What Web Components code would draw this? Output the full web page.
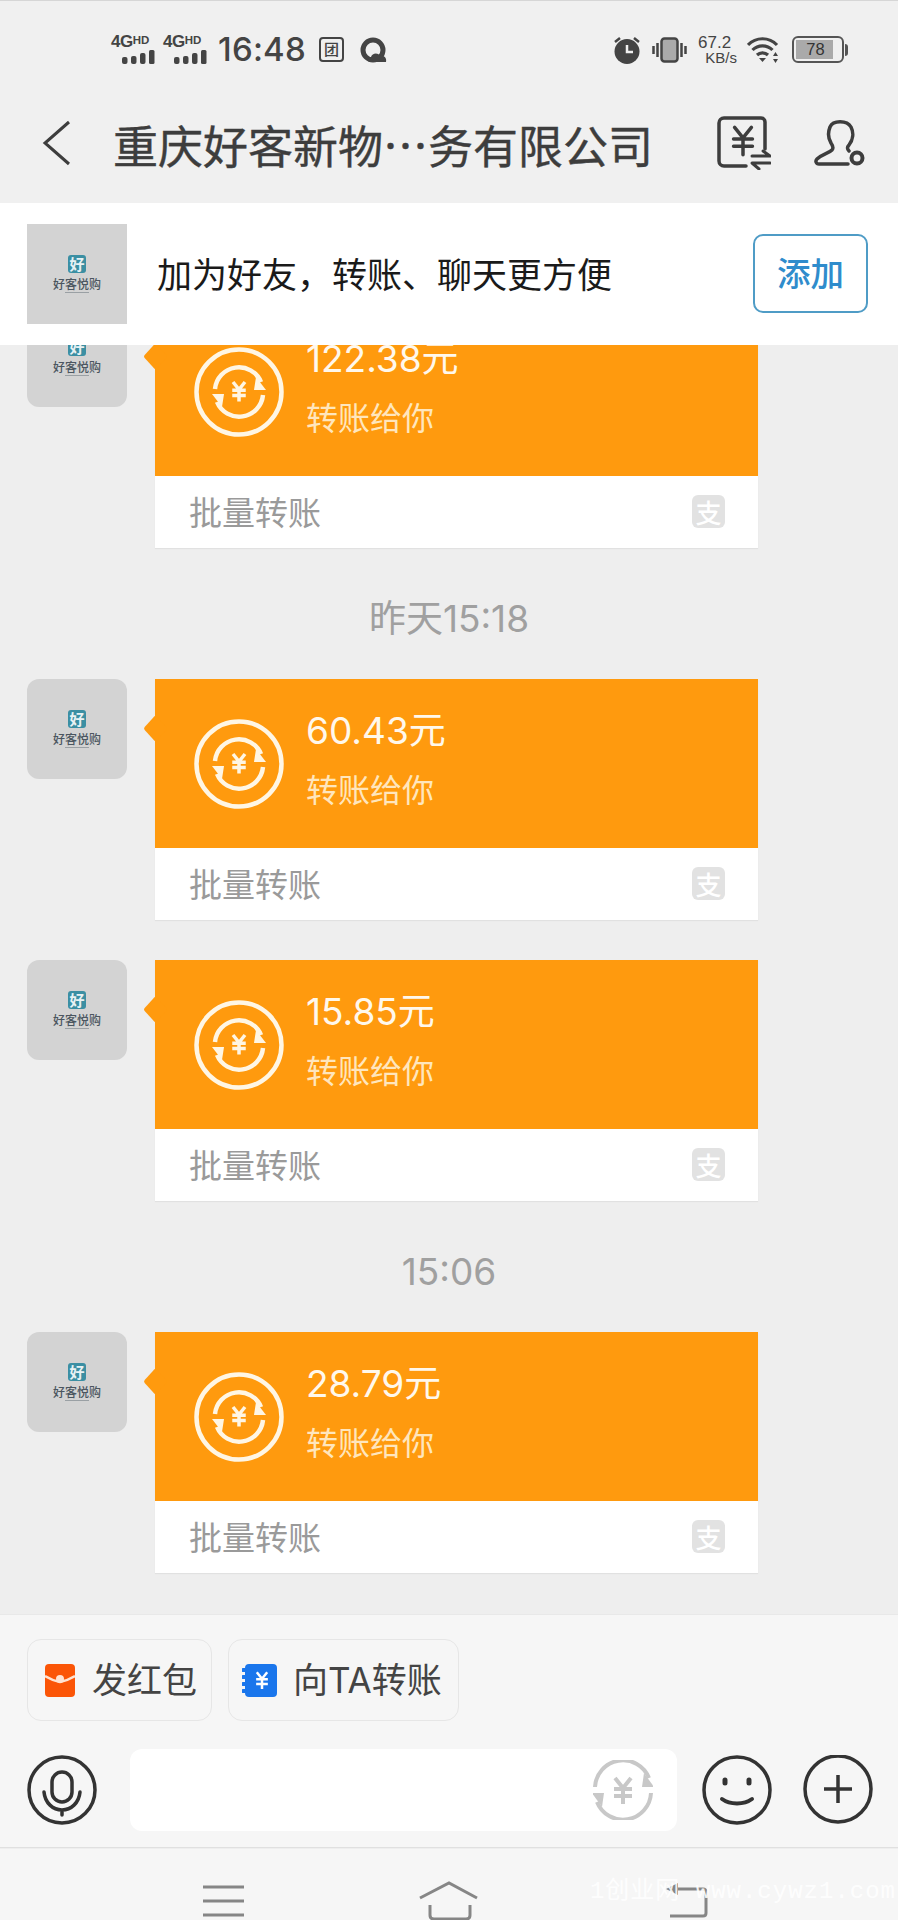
<!DOCTYPE html>
<html lang="zh">
<head>
<meta charset="utf-8">
<title>chat</title>
<style>
	html, body {
		margin: 0;
		padding: 0;
		background: #eee;
		font-family: "Noto Sans CJK SC", "Liberation Sans", sans-serif;
	}
	chat-screen {
		width: 898px;
		height: 1920px;
	}
</style>
</head>
<body>
<chat-screen>
	<status-bar slot="status"></status-bar>
	<chat-header slot="header" title="重庆好客新物…务有限公司"></chat-header>
	<friend-bar slot="friend">加为好友，转账、聊天更方便</friend-bar>
	<transfer-row amount="122.38元"></transfer-row>
	<time-label>昨天15:18</time-label>
	<transfer-row amount="60.43元"></transfer-row>
	<transfer-row amount="15.85元"></transfer-row>
	<time-label>15:06</time-label>
	<transfer-row amount="28.79元"></transfer-row>
	<chat-composer slot="composer"></chat-composer>
	<nav-bar slot="nav"></nav-bar>
</chat-screen>

<script>
const SANS = '"Noto Sans CJK SC", "Liberation Sans", sans-serif';
const LATIN_SANS = '"Inter", "Noto Sans CJK SC", sans-serif';

// the yen sign is used three times, with different stroke and colour
const yenLines = (cx, cy, s) => `
	<path d="M${cx - 8 * s} ${cy - 12 * s}L${cx} ${cy - 2 * s}L${cx + 8 * s} ${cy - 12 * s}
		M${cx - 9 * s} ${cy - 1 * s}H${cx + 9 * s}M${cx - 9 * s} ${cy + 6 * s}H${cx + 9 * s}
		M${cx} ${cy - 2 * s}V${cy + 14 * s}" fill="none"/>`;

// two arcs chasing each other around the yen sign
const loopArcs = (r) => `
	<path d="M${-r} -3A${r} ${r} 0 0 1 ${r - 2} -${Math.round(r * 0.42)}" fill="none"/>
	<path d="M${r} 3A${r} ${r} 0 0 1 ${-r + 2} ${Math.round(r * 0.42)}" fill="none"/>
	<path d="M${r + 3} -${Math.round(r * 0.1)}L${r - 7} -${Math.round(r * 0.62)}L${r - 9} -${Math.round(r * 0.1)}Z" stroke="none" fill="currentColor"/>
	<path d="M${-r - 3} ${Math.round(r * 0.1)}L${-r + 7} ${Math.round(r * 0.62)}L${-r + 9} ${Math.round(r * 0.1)}Z" stroke="none" fill="currentColor"/>`;

class BaseElement extends HTMLElement {
	constructor() {
		super();
		this.attachShadow({ mode: 'open' });
	}

	connectedCallback() {
		this.shadowRoot.innerHTML = this._getTemplate();
	}
}

class ChatScreen extends BaseElement {
	_getTemplate() {
		return `
			<style>
				:host {
					display: flex;
					flex-direction: column;
					position: relative;
					overflow: hidden;
					background: #eee;
				}
				.messages {
					flex: 1;
					min-height: 0;
					overflow: hidden;
					display: flex;
					flex-direction: column;
					justify-content: flex-end;
					padding-bottom: 41px;
				}
			</style>
			<slot name="status"></slot>
			<slot name="header"></slot>
			<slot name="friend"></slot>
			<div class="messages"><slot></slot></div>
			<slot name="composer"></slot>
			<slot name="nav"></slot>
		`;
	}
}

class SignalIcon extends BaseElement {
	_getTemplate() {
		return `
			<style>
				:host {
					display: flex;
					flex-direction: column;
					align-items: flex-end;
					width: 44px;
					color: #444;
					font-family: "Liberation Sans", sans-serif;
					font-weight: 700;
				}
				.net {
					display: flex;
					align-self: flex-start;
					align-items: flex-start;
					height: 14px;
					line-height: 14px;
					font-size: 17px;
					letter-spacing: -.5px;
				}
				.net span {
					font-size: 11.500px;
					line-height: 11px;
					letter-spacing: 0;
				}
				svg {
					display: block;
				}
			</style>
			<div class="net">4G<span>HD</span></div>
			<svg width="33" height="16" viewBox="0 0 33 16" fill="#444">
				<rect x="0" y="8" width="5.500" height="7" rx="2"/>
				<rect x="9" y="7" width="5.500" height="8" rx="2"/>
				<rect x="18" y="4" width="5.500" height="11" rx="2"/>
				<rect x="27" y="1" width="5.500" height="14" rx="1.500"/>
			</svg>
		`;
	}
}

class StatusBar extends BaseElement {
	_getTemplate() {
		return `
			<style>
				:host {
					display: flex;
					align-items: center;
					justify-content: space-between;
					box-sizing: border-box;
					height: 100px;
					padding: 0 50px 2px 111px;
					background: #f0f0f0;
					border-top: 1px solid #d6d6d6;
					color: #444;
				}
				.group {
					display: flex;
					align-items: center;
				}
				.time {
					font: 500 33px/1 "Inter", "Liberation Sans", sans-serif;
					letter-spacing: .2px;
					margin: 0 11px;
					width: 90px;
					white-space: nowrap;
				}
				.tuan {
					box-sizing: border-box;
					width: 25px;
					height: 25px;
					border: 2.500px solid #444;
					border-radius: 4px;
					font: 500 15px/19px ${SANS};
					text-align: center;
					margin-right: 16px;
				}
				.speed {
					display: flex;
					flex-direction: column;
					align-items: flex-end;
					width: 39px;
					margin: 0 10px 0 11px;
					font: 400 15px/14px "Liberation Sans", sans-serif;
				}
				.speed span:first-child {
					align-self: flex-start;
					font-size: 17px;
					line-height: 16px;
				}
				.battery {
					box-sizing: border-box;
					width: 52px;
					height: 27px;
					margin-left: 11px;
					border: 2.500px solid #555;
					border-radius: 6px;
					padding: 2px;
				}
				.battery .level {
					box-sizing: border-box;
					width: 37px;
					height: 100%;
					padding-left: 2px;
					background: #aaa;
					color: #333;
					font: 500 16.500px/18px "Liberation Sans", sans-serif;
					text-align: center;
				}
				.nub {
					width: 3px;
					height: 12px;
					background: #555;
					border-radius: 0 3px 3px 0;
					margin-left: 1px;
				}
				svg {
					display: block;
				}
			</style>
			<div class="group">
				<signal-icon></signal-icon>
				<signal-icon style="margin-left:8px"></signal-icon>
				<div class="time">16:48</div>
				<div class="tuan">团</div>
				<svg width="27" height="26" viewBox="0 0 27 26">
					<circle cx="13" cy="13" r="10" fill="none" stroke="#444" stroke-width="5"/>
					<path d="M10 25c-3 0-3-5 1-5 1-4 7-5 9-1 4-1 7 2 6 6z" fill="#444"/>
				</svg>
			</div>
			<div class="group">
				<svg width="28" height="28" viewBox="0 0 28 28" style="margin-right:11px">
					<circle cx="14" cy="15.500" r="12.500" fill="#444"/>
					<path d="M14 9v7h6" fill="none" stroke="#f0f0f0" stroke-width="2.500"/>
					<path d="M2 6l5-4M26 6l-5-4" stroke="#444" stroke-width="2.500" fill="none"/>
				</svg>
				<svg width="35" height="26" viewBox="0 0 35 26">
					<rect x="9.500" y="1.500" width="16" height="23" rx="3" fill="#aaa" stroke="#444" stroke-width="2.500"/>
					<path d="M1.500 9v8M5.500 6v14M29.500 6v14M33.500 9v8" stroke="#444" stroke-width="2.500"/>
				</svg>
				<div class="speed"><span>67.2</span><span>KB/s</span></div>
				<svg width="34" height="26" viewBox="0 0 34 26">
					<path d="M1 8a20 20 0 0 1 29 0M5.500 13a14 14 0 0 1 20 0M10 18a8 8 0 0 1 11 0" fill="none" stroke="#444" stroke-width="3.200"/>
					<path d="M12 21h7l-3.500 4z" fill="#444"/>
					<path d="M28.500 15l-2.500 4h5zM28.500 26l-2.500-4h5z" fill="#444"/>
				</svg>
				<div class="battery"><div class="level">78</div></div>
				<div class="nub"></div>
			</div>
		`;
	}
}

class ChatHeader extends BaseElement {
	_getTemplate() {
		return `
			<style>
				:host {
					display: flex;
					align-items: center;
					box-sizing: border-box;
					height: 103px;
					padding: 0 32px 18px 42px;
					background: #f0f0f0;
					color: #3d3d3d;
				}
				.title {
					flex: 1;
					margin: 3px 0 0 41px;
					font: 400 45px/1 ${SANS};
					white-space: nowrap;
					-webkit-text-stroke: .4px #3d3d3d;
				}
				svg {
					display: block;
					flex: none;
				}
			</style>
			<svg width="30" height="46" viewBox="0 0 30 46">
				<path d="M27 2L3 23l24 21" fill="none" stroke="#3d3d3d" stroke-width="3"/>
			</svg>
			<div class="title">${this.getAttribute('title')}</div>
			<svg width="54" height="54" viewBox="0 0 54 54" stroke="#3d3d3d" stroke-width="3.500" fill="none" stroke-linecap="round" stroke-linejoin="round">
				<path d="M29 50H7a5 5 0 0 1-5-5V7a5 5 0 0 1 5-5h37a4 4 0 0 1 4 4v27"/>
				<g transform="translate(26 24)">${yenLines(0, 0, 1.050)}</g>
				<path d="M35 40h18l-7-5M53 47H35l7 6" stroke-width="3"/>
			</svg>
			<svg width="52" height="50" viewBox="0 0 52 50" stroke="#3d3d3d" stroke-width="3.500" fill="none" stroke-linecap="round" stroke-linejoin="round" style="margin-left:43px">
				<path d="M34 46H5c-3 0-4-3-2-5 5-5 12-6 15-9 2-2 1-4-1-7-3-5-3-11-1-16 3-7 17-7 21 0 3 6 2 13-2 18-2 2-2 4 0 6"/>
				<circle cx="43" cy="40" r="5.500" stroke-width="4"/>
			</svg>
		`;
	}
}

class ShopAvatar extends BaseElement {
	_getTemplate() {
		const radius = this.hasAttribute('square') ? 0 : 12;

		return `
			<style>
				:host {
					display: flex;
					flex-direction: column;
					align-items: center;
					flex: none;
					box-sizing: border-box;
					width: 100px;
					height: 100px;
					padding-top: 31px;
					background: #d3d3d3;
					border-radius: ${radius}px;
					overflow: hidden;
				}
				.logo {
					width: 18px;
					height: 18px;
					background: #3b8fa3;
					border-radius: 3px;
					color: #e8f2f4;
					font: 700 15px/18px ${SANS};
					text-align: center;
				}
				.name {
					margin-top: 3px;
					color: #4b5660;
					font: 500 12px/15px ${SANS};
					white-space: nowrap;
				}
				.line {
					width: 24px;
					height: 1px;
					margin-top: 1px;
					background: #9aa0a4;
				}
			</style>
			<div class="logo">好</div>
			<div class="name">好客悦购</div>
			<div class="line"></div>
		`;
	}
}

class FriendBar extends BaseElement {
	_getTemplate() {
		return `
			<style>
				:host {
					display: flex;
					align-items: center;
					box-sizing: border-box;
					height: 142px;
					padding: 0 30px 0 27px;
					background: #fff;
					position: relative;
					z-index: 1;
				}
				.text {
					flex: 1;
					margin: 0 0 4px 30px;
					color: #1a1a1a;
					font: 400 35px/1 ${SANS};
					white-space: nowrap;
				}
				button {
					box-sizing: border-box;
					width: 115px;
					height: 79px;
					padding: 0 0 3px;
					margin-bottom: 1px;
					background: #fff;
					border: 2px solid #4f9cc6;
					border-radius: 10px;
					color: #2f8ccc;
					font: 500 33.500px/1 ${SANS};
				}
			</style>
			<shop-avatar square></shop-avatar>
			<div class="text"><slot></slot></div>
			<button type="button">添加</button>
		`;
	}
}

class TransferRow extends BaseElement {
	_getTemplate() {
		return `
			<style>
				:host {
					display: flex;
					flex: none;
					padding: 0 0 0 27px;
					margin-top: 40px;
				}
				.card {
					position: relative;
					box-sizing: border-box;
					width: 603px;
					height: 241px;
					margin-left: 28px;
					background: #fff;
					box-shadow: 0 1px 1px rgba(0, 0, 0, .05);
				}
				.top {
					display: flex;
					align-items: center;
					box-sizing: border-box;
					height: 169px;
					padding-left: 39px;
					background: #ff9a0e;
					color: #fff6e4;
				}
				/* the little tail pointing at the avatar */
				.top::before {
					content: "";
					position: absolute;
					left: -9.500px;
					top: 39.500px;
					width: 19px;
					height: 19px;
					background: #ff9a0e;
					border-radius: 2px;
					transform: scaleX(.9) rotate(45deg);
				}
				.info {
					margin-left: 22px;
					align-self: flex-start;
					padding-top: 24px;
				}
				.amount {
					color: #fff8ec;
					font: 400 37px/56px ${LATIN_SANS};
					white-space: nowrap;
				}
				.sub {
					margin-top: 6px;
					color: #ffe6bd;
					font: 400 32px/46px ${SANS};
				}
				.bottom {
					display: flex;
					align-items: center;
					justify-content: space-between;
					box-sizing: border-box;
					height: 72px;
					padding: 0 33px 2px 34px;
					color: #9a9a9a;
					font: 400 33px/1 ${SANS};
				}
				.pay {
					width: 33px;
					height: 33px;
					background: #e2e2e2;
					border-radius: 6px;
					color: #fff;
					font: 500 26px/33px ${SANS};
					text-align: center;
				}
				svg {
					display: block;
					flex: none;
				}
			</style>
			<shop-avatar></shop-avatar>
			<div class="card">
				<div class="top">
					<svg width="90" height="90" viewBox="-45 -45 90 90" stroke="currentColor" fill="none" stroke-width="4.500">
						<circle r="42.500"/>
						${loopArcs(24)}
						<g stroke-width="3.500">${yenLines(0, -1, .75)}</g>
					</svg>
					<div class="info">
						<div class="amount">${this.getAttribute('amount')}</div>
						<div class="sub">转账给你</div>
					</div>
				</div>
				<div class="bottom">
					<span>批量转账</span>
					<span class="pay">支</span>
				</div>
			</div>
		`;
	}
}

class TimeLabel extends BaseElement {
	_getTemplate() {
		return `
			<style>
				:host {
					display: block;
					flex: none;
					height: 46px;
					margin: 48px 0 -3px;
					color: #a0a0a0;
					font: 400 37px/46px ${LATIN_SANS};
					text-align: center;
				}
			</style>
			<slot></slot>
		`;
	}
}

class ChatComposer extends BaseElement {
	_getTemplate() {
		return `
			<style>
				:host {
					display: block;
					box-sizing: border-box;
					height: 234px;
					padding: 24px 25px 0 27px;
					background: #f6f6f6;
					border-top: 1px solid #e8e8e8;
					border-bottom: 1px solid #e0e0e0;
				}
				.chips {
					display: flex;
					gap: 16px;
				}
				.chip {
					display: flex;
					align-items: center;
					box-sizing: border-box;
					height: 82px;
					border: 1.500px solid #e6e6e6;
					border-radius: 14px;
					color: #444;
					font: 400 35px/1 ${LATIN_SANS};
					white-space: nowrap;
				}
				.chip.red {
					width: 185px;
					padding-left: 17px;
					gap: 17px;
				}
				.chip.blue {
					width: 231px;
					padding-left: 13px;
					gap: 16px;
				}
				.input-row {
					display: flex;
					align-items: center;
					margin-top: 28px;
				}
				.input {
					display: flex;
					align-items: center;
					justify-content: flex-end;
					box-sizing: border-box;
					width: 548px;
					height: 82px;
					margin: 0 25px 0 33px;
					padding-right: 24px;
					background: #fff;
					border-radius: 12px;
					color: #c8c8c8;
				}
				svg {
					display: block;
					flex: none;
				}
				.round {
					stroke: #333;
					fill: none;
					stroke-width: 3.500;
					stroke-linecap: round;
				}
			</style>
			<div class="chips">
				<div class="chip red">
					<svg width="30" height="33" viewBox="0 0 30 33">
						<rect width="30" height="33" rx="4" fill="#fb5507"/>
						<path d="M0 12c5 3 10 5 15 6 5-1 10-3 15-6" fill="none" stroke="#ffe3d2" stroke-width="2.500"/>
						<circle cx="15" cy="15" r="4" fill="#ffe3d2"/>
					</svg>
					发红包
				</div>
				<div class="chip blue">
					<svg width="35" height="33" viewBox="0 0 35 33">
						<rect x="3" width="32" height="33" rx="4" fill="#1a76ec"/>
						<path d="M3 6h-2M3 13h-2M3 20h-2M3 27h-2" stroke="#1a76ec" stroke-width="4" stroke-linecap="round"/>
						<g stroke="#fff" stroke-width="2.500" transform="translate(20 16)">${yenLines(0, 0, .65)}</g>
					</svg>
					向TA转账
				</div>
			</div>
			<div class="input-row">
				<svg class="round" width="70" height="70" viewBox="0 0 70 70">
					<circle cx="35" cy="35" r="33"/>
					<rect x="25" y="17" width="20" height="30" rx="10"/>
					<path d="M17 37c1 11 9 18 18 18s17-7 18-18M35 55v5"/>
				</svg>
				<div class="input">
					<svg width="60" height="60" viewBox="-30 -30 60 60" stroke="currentColor" fill="none" stroke-width="4">
						${loopArcs(28)}
						<g stroke-width="4">${yenLines(0, 0, 1)}</g>
					</svg>
				</div>
				<svg class="round" width="70" height="70" viewBox="0 0 70 70">
					<circle cx="35" cy="35" r="33"/>
					<path d="M20 44c8 6 22 6 30 0" stroke-width="4"/>
					<path d="M23 25v3M47 25v3" stroke-width="5"/>
				</svg>
				<svg class="round" width="70" height="70" viewBox="0 0 70 70" style="margin-left:31px">
					<circle cx="35" cy="34" r="33"/>
					<path d="M21 34h28M35 20v28" stroke-linecap="butt"/>
				</svg>
			</div>
		`;
	}
}

class NavBar extends BaseElement {
	_getTemplate() {
		return `
			<style>
				:host {
					display: flex;
					box-sizing: border-box;
					height: 72px;
					padding-left: 203px;
					background: #f6f6f6;
					border-top: 1px solid #eee;
					position: relative;
				}
				svg {
					display: block;
					flex: none;
					stroke: #868686;
					stroke-width: 3;
					fill: none;
				}
				.mark {
					position: absolute;
					right: 2px;
					top: 29px;
					color: rgba(255, 255, 255, .9);
					font: 400 24px/28px "Liberation Mono", "Noto Sans CJK SC", monospace;
					letter-spacing: 1px;
					white-space: nowrap;
				}
			</style>
			<svg width="41" height="72" viewBox="0 0 41 72">
				<path d="M0 38h41M0 52h41M0 66h41"/>
			</svg>
			<svg width="60" height="72" viewBox="0 0 60 72" style="margin-left:175px">
				<path d="M1 49L30 34l28 15M11 56v10q0 4 4 4h32q4 0 4-4v-10"/>
			</svg>
			<svg width="44" height="72" viewBox="0 0 44 72" style="margin-left:185px">
				<path d="M11 40h28q3 0 3 3v21q0 3-3 3H6"/>
				<path d="M2 40l12-6v12z" fill="#868686" stroke="none"/>
			</svg>
			<div class="mark">1创业网 www.cywz1.com</div>
		`;
	}
}

customElements.define('chat-screen', ChatScreen);
customElements.define('signal-icon', SignalIcon);
customElements.define('status-bar', StatusBar);
customElements.define('chat-header', ChatHeader);
customElements.define('shop-avatar', ShopAvatar);
customElements.define('friend-bar', FriendBar);
customElements.define('transfer-row', TransferRow);
customElements.define('time-label', TimeLabel);
customElements.define('chat-composer', ChatComposer);
customElements.define('nav-bar', NavBar);
</script>
</body>
</html>
